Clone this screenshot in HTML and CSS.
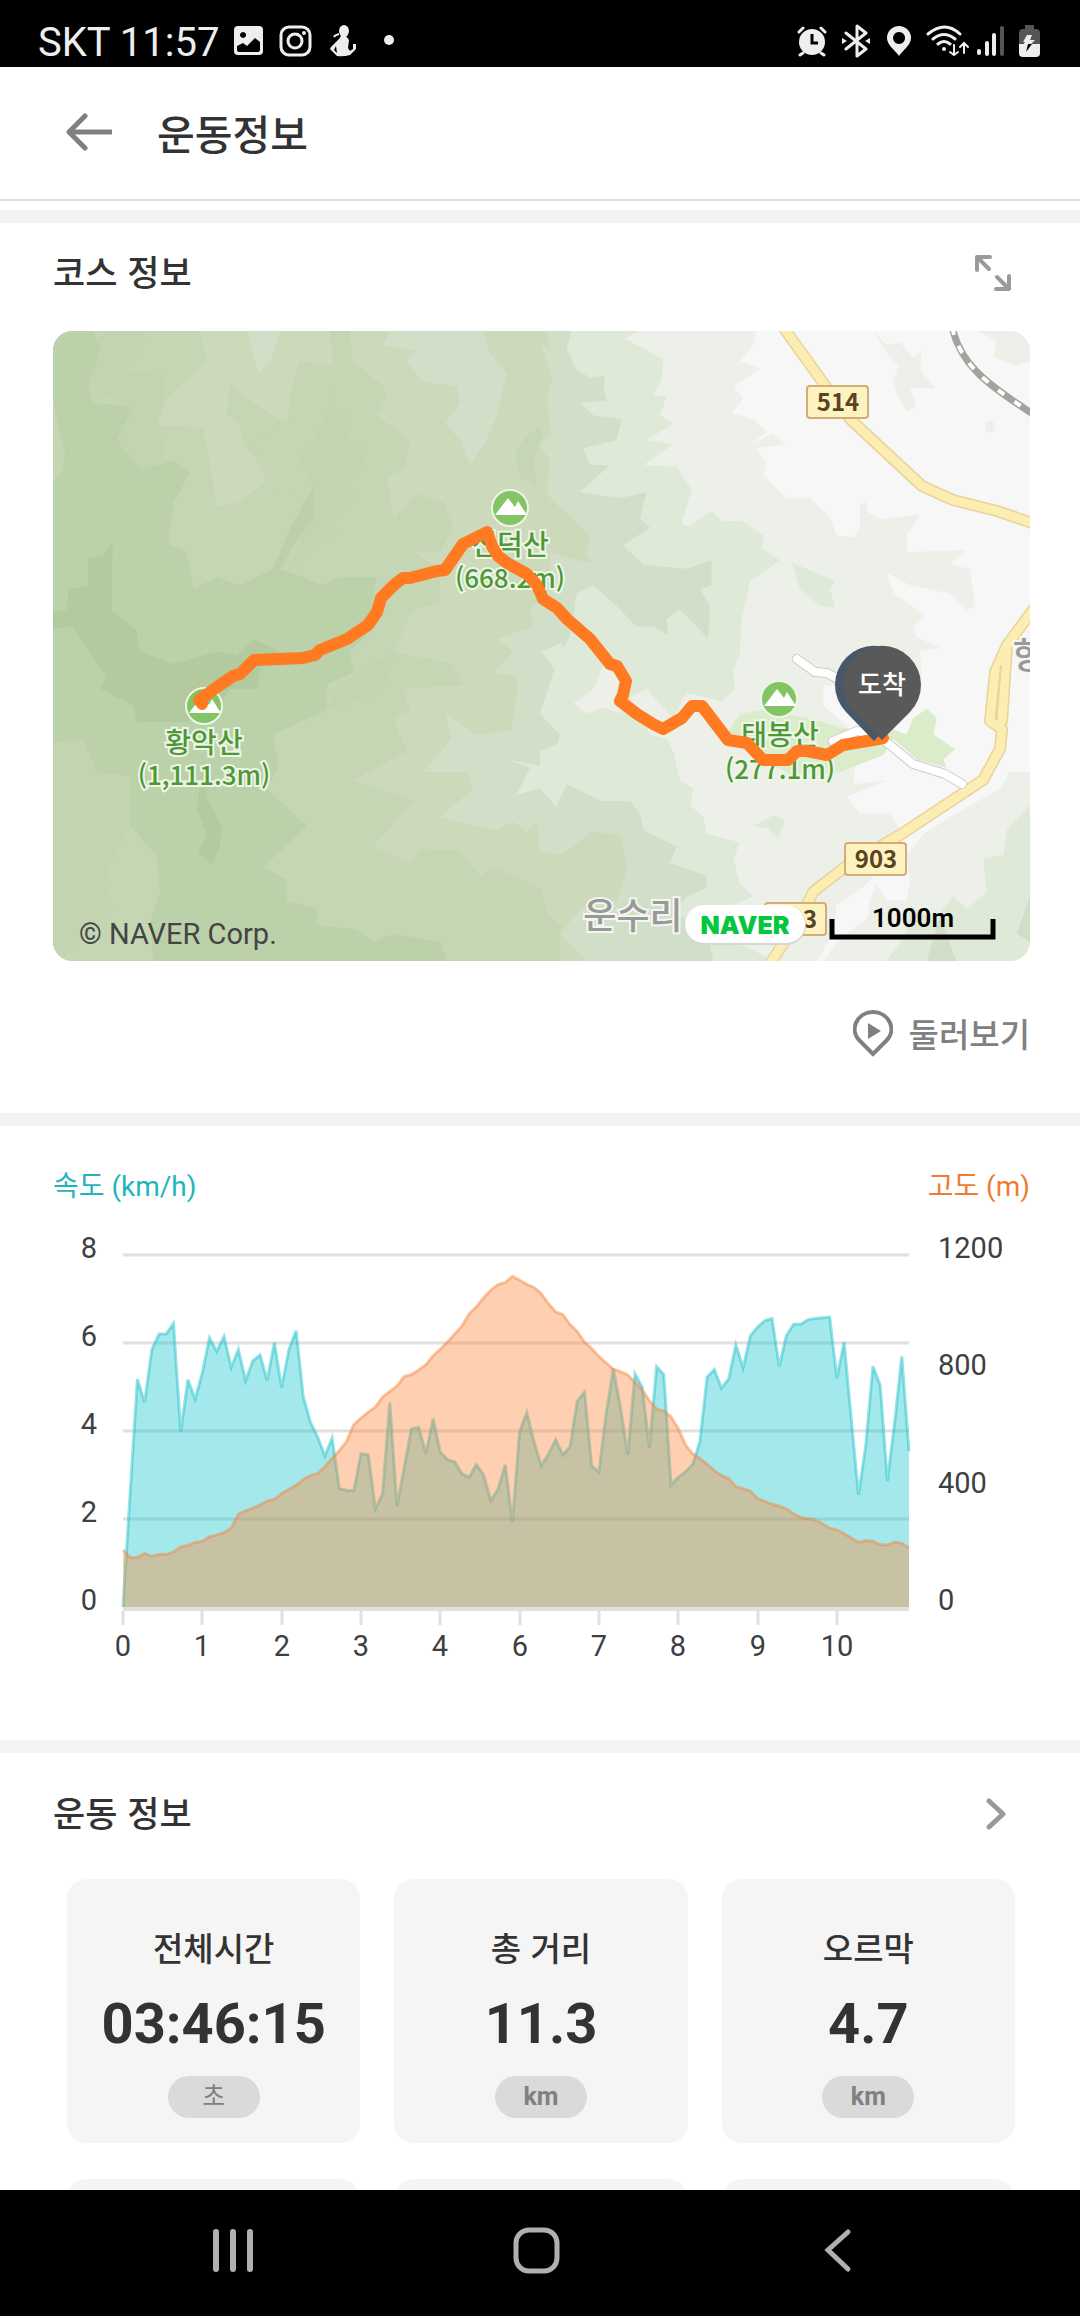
FILE: index.html
```
<!DOCTYPE html>
<html lang="ko">
<head>
    <meta charset="UTF-8">
    <meta name="viewport" content="width=device-width, initial-scale=1.0">
    <title>운동정보</title>
    <link rel="stylesheet" href="styles.css">
</head>
<body>

<div class="status-bar">
    <span class="carrier">SKT 11:57</span>
    <svg class="status-left" viewBox="0 0 166 34" width="166" height="34" fill="#eee">
        <!-- picture -->
        <path fill-rule="evenodd" d="M4 2h21a4 4 0 0 1 4 4v21a4 4 0 0 1-4 4H4a4 4 0 0 1-4-4V6a4 4 0 0 1 4-4zM3 22v4q0 2 2 2h19q2 0 2-2v-8l-5-4-8 8-4-3zM9 8a3 3 0 1 0 .1 0z"/>
        <!-- instagram -->
        <g fill="none" stroke="#eee" stroke-width="3">
            <rect x="47" y="3" width="29" height="28" rx="8"/>
            <circle cx="61" cy="17" r="7"/>
        </g>
        <circle cx="70" cy="9" r="2"/>
        <!-- running figure -->
        <ellipse cx="110" cy="7" rx="5" ry="6"/>
        <path fill-rule="evenodd" d="M107 12h5l3 4-1 8 2 3 3-2v-5h3v5l-6 6q-7 2-13 1l-7-7 1-2 8-8zM102 22l-2 4 3 3z"/>
        <path d="M100 13q1-2 5-3" fill="none" stroke="#eee" stroke-width="2"/>
        <circle cx="155" cy="16" r="5"/>
    </svg>
    <svg class="status-right" viewBox="0 0 246 34" width="246" height="34" fill="#eee">
        <!-- alarm -->
        <circle cx="15" cy="18" r="13"/>
        <path d="M2 8l4-4M28 8l-4-4M6 29l-3 2M24 29l3 2" stroke="#eee" stroke-width="3" stroke-linecap="round"/>
        <path d="M15 10v9h6" fill="none" stroke="#000" stroke-width="3"/>
        <!-- bluetooth -->
        <path d="M49 9l20 16-9 7V2l9 7-20 16" fill="none" stroke="#eee" stroke-width="3" stroke-linejoin="round" stroke-linecap="round"/>
        <path d="M45 14l5 3-5 3zM73 14l-5 3 5 3z"/>
        <!-- location -->
        <path fill-rule="evenodd" d="M102 2a12 12 0 0 1 12 12c0 7-8 12-12 18-4-6-12-11-12-18a12 12 0 0 1 12-12zm0 6a6 6 0 1 0 .1 0z"/>
        <!-- wifi -->
        <g fill="none" stroke="#eee" stroke-width="3" stroke-linecap="round">
            <path d="M131 10q17-14 32 0M136 15q11-9 22 0M141 20q6-5 12 0"/>
            <path d="M157 21v10m-4-3l4 3 4-3M167 29V19m-4 4l4-4 4 4" stroke-width="2"/>
        </g>
        <circle cx="147" cy="25" r="2"/>
        <!-- signal -->
        <g stroke-width="4" stroke-linecap="round">
            <path d="M182 27v2M190 19v11M197 11v19" stroke="#eee"/>
            <path d="M205 4v26" stroke="#555"/>
        </g>
        <!-- battery -->
        <path d="M228 1h9v4h2a4 4 0 0 1 4 4v11h-21V9a4 4 0 0 1 4-4h2z" fill="#555"/>
        <path d="M222 20h21v9a4 4 0 0 1-4 4h-13a4 4 0 0 1-4-4z"/>
        <path d="M230 11h5l-2 5h5l-5 5h-7l2-3h-2z"/>
        <path d="M229 28l2-8h4z" fill="#000"/>
    </svg>
</div>

<header class="header">
    <button class="icon-button" aria-label="뒤로">
        <svg viewBox="0 0 46 38" width="46" height="38" fill="none" stroke="#808080" stroke-width="5" stroke-linejoin="round">
            <path d="M3 19h43"/>
            <path d="M19 3L3 19l16 16" stroke-linecap="round"/>
        </svg>
    </button>
    <h1>운동정보</h1>
</header>

<main class="content">
    <section class="section course">
        <div class="section-head">
            <h2>코스 정보</h2>
            <button class="icon-button expand" aria-label="크게 보기">
                <svg viewBox="0 0 36 36" width="36" height="36" fill="none" stroke="#9a9a9a" stroke-width="4" stroke-linecap="round" stroke-linejoin="round">
                    <path d="M2 15V2h13M3 3l11 11"/>
                    <path d="M34 21v13H21M33 33L22 22"/>
                </svg>
            </button>
        </div>

        <svg class="map" viewBox="0 0 977 630" role="img" aria-label="코스 지도">
            <!-- terrain -->
            <rect width="977" height="630" fill="#f7f7f7"/>
            <svg width="977" height="630" viewBox="39 27 2931 1519" preserveAspectRatio="none">
                <path fill="#ecf0e8" d="M39 27H2150L2140 60 2100 100 2160 118 2080 160 2110 190 2075 225 2140 240 2180 270 2130 300 2200 275 2235 300 2150 310 2180 345 2170 375 2240 430 2310 430 2370 475 2390 520 2440 525 2460 500 2460 450 2475 437 2485 465 2520 480 2640 470 2600 520 2600 560 2780 555 2730 590 2790 600 2805 690 2780 700 2730 660 2610 640 2540 610 2560 660 2600 680 2655 715 2620 740 2630 765 2700 790 2640 800 2645 860 2570 900 2350 880 2350 930 2450 1000 2440 1120 2540 1110 2420 1150 2460 1190 2550 1190 2590 1240 2560 1300 2450 1380 2390 1410 2380 1480 2330 1546H39z"/>
                <path fill="#ecf0e8" d="M2970 1090L2910 1090 2880 1130 2750 1190 2650 1240 2600 1290 2610 1360 2600 1400 2540 1400 2510 1360 2490 1400 2485 1440 2390 1500 2350 1546H2970zM2810 27H2940L2970 60V100L2930 110 2860 90 2870 50zM2500 27L2540 60 2580 55 2620 90 2645 75 2640 120 2685 165 2610 165 2630 210 2600 220 2570 180 2560 150 2575 110 2540 80z"/>
                <circle cx="2850" cy="258" r="15" fill="#ecf0e8"/>
                <path fill="#dfe9d8" d="M39 27H1800L1755 45 1870 95 1865 145 1840 180 1880 185 1860 230 1900 250 1820 290 1900 300 1810 350 1910 355 1955 410 1925 490 1945 500 2015 460 2045 485 2105 485 2170 520 2165 550 2220 580 2130 630 2105 720 2100 800 2080 850 2085 890 2045 920 1940 900 1900 960 1820 890 1770 910 1830 1000 1880 1010 1900 1040 1920 1110 1960 1130 1950 1170 1990 1200 2000 1240 2100 1260 2080 1300 2100 1360 2140 1390 2060 1420 2000 1440 2080 1500 2140 1520 2200 1546H39z"/>
                <path fill="#ecf0e8" d="M1690 835L1735 860 1755 905 1740 950 1690 935 1640 950 1600 925 1660 890z"/>
                <path fill="#dfe9d8" d="M2255 585L2385 630 2370 650 2385 695 2340 690 2280 650zM2140 1220L2200 1195 2235 1205 2215 1250 2180 1225zM2970 1170L2900 1230 2890 1290 2830 1300 2840 1380 2780 1420 2740 1390 2680 1450 2610 1410 2600 1480 2540 1546H2970z"/>
                <path fill="#d2dfc8" d="M39 27H1595L1580 70 1610 120 1650 140 1695 135 1690 160 1700 195 1620 200 1660 230 1745 240 1730 290 1630 310 1650 350 1710 350 1620 415 1740 430 1820 415 1800 480 1830 500 1750 545 1810 590 1940 600 2015 580 2015 640 1980 650 2010 690 2005 770 1970 740 1920 700 1880 720 1885 760 1840 740 1790 740 1730 690 1660 640 1610 660 1590 760 1540 850 1500 950 1560 1000 1540 1060 1560 1130 1550 1170 1580 1120 1685 1160 1770 1160 1800 1190 1810 1230 1910 1270 1890 1310 2000 1340 2000 1370 1940 1390 1900 1430 2000 1470 2020 1546H39z"/>
                <path fill="#dfe9d8" d="M1400 1060L1500 1075 1500 1040 1560 1020 1600 1050 1550 1175 1500 1130 1430 1145 1470 1080zM1505 800L1560 780 1640 850 1600 860 1540 840z"/>
                <path fill="#d2dfc8" d="M2970 1390L2930 1480 2970 1500zM2700 1440L2660 1546H2750z"/>
                <path fill="#ccd9ba" d="M39 27H1520L1540 130 1520 190 1535 280 1545 360 1530 430 1650 520 1640 570 1670 590 1610 580 1530 560 1530 650 1470 700 1480 740 1370 770 1420 800 1360 850 1430 860 1430 900 1415 990 1310 1000 1215 950 1235 1010 1150 1090 1280 1090 1300 1130 1200 1200 1300 1220 1370 1230 1420 1210 1460 1235 1490 1210 1500 1280 1560 1290 1600 1270 1650 1235 1740 1240 1755 1290 1760 1330 1730 1400 1620 1420 1560 1480 1640 1546H39z"/>
                <path fill="#d2dfc8" d="M1030 60L1130 75 1100 100 1150 150 1250 160 1260 200 1215 250 1260 290 1290 350 1340 290 1370 230 1400 130 1350 80 1330 27H1050zM625 27L640 90 655 128 690 100 720 27zM1500 50L1560 100 1560 260 1500 300 1530 340 1520 420 1590 430 1560 200zM1740 620L1820 650 1790 660z"/>
                <path fill="#c5d6b5" d="M39 27H480L500 100 380 190 350 255 490 260 530 450 600 440 690 380 640 330 610 300 600 250 560 230 570 150 620 190 740 250 750 180 780 100 880 110 870 27H930L940 100 1030 160 1040 190 1010 230 1110 290 1090 360 1040 380 1060 480 1130 420 1210 440 1240 500 1200 560 1120 560 1200 600 1200 680 1120 700 1060 800 1240 830 1270 880 1090 890 1110 940 1060 960 1100 1040 940 1110 1120 1160 1000 1270 1110 1310 1140 1275 1260 1280 1320 1340 1360 1320 1500 1370 1530 1440 1560 1460V1546H39zM1500 255L1505 285 1480 340 1490 400 1440 380 1425 320 1460 280z"/>
                <path fill="#c5d6b5" d="M640 300L700 260 760 230 790 430 680 400z"/>
                <path fill="#c3d4b1" d="M880 170L890 220 935 240 920 300 980 310 970 360 900 380 950 430 880 470 890 510 750 600 800 480 820 400 780 340 850 250zM180 27H330L300 80 240 130 380 120 350 250 380 280 370 340 300 360 230 290 280 210 145 160zM1070 800L1020 900 860 940 900 880 1000 830zM39 1020L130 1010 170 1090 270 1100 270 1220 230 1280 190 1360 220 1420 60 1546H39z"/>
                <path fill="#bbd1a9" d="M39 27H160L180 70 145 160 160 200 280 210 230 290 300 360 400 340 450 370 400 440 385 540 440 560 460 650 530 620 600 640 700 600 740 520 820 400 820 480 780 520 720 600 850 640 900 620 1010 620 980 760 930 800 940 850 860 880 860 940 700 1000 715 1080 680 1130 800 1220 670 1320 740 1350 740 1400 830 1420 830 1460 950 1470 1000 1500 1060 1480 1200 1500 1220 1546H340L330 1450 360 1380 350 1290 270 1220 270 1100 170 1090 130 1010 39 1020z"/>
                <path fill="#b3c99e" d="M39 705L80 700 85 650 145 640 145 575 190 570 218 530 215 700 290 750 300 800 400 830 530 800 590 810 640 770 720 800 660 830 655 890 570 890 520 950 430 970 290 970 280 930 180 890 200 860 140 790 100 740 39 745zM490 1060L500 1150 545 1220 540 1270 515 1315 475 1285 500 1240 470 1180z"/>
                <path fill="#c5d6b5" d="M39 190L55 260 75 320 70 360 39 390z"/>
                <path fill="#dbeccb" d="M2100 950L2180 940 2300 960 2440 990 2550 985 2600 1000 2620 960 2660 938 2690 960 2680 1000 2745 1035 2710 1060 2720 1080 2630 1060 2560 1010 2530 1050 2400 1090 2260 1100 2050 1010z"/>
            </svg>

            <!-- roads -->
            <g fill="none" stroke-linejoin="round" stroke-linecap="round">
                <g stroke="#e8d39b" stroke-width="12">
                    <path d="M730-4L774 57 797 88 869 155 900 169 944 180 985 194"/>
                    <path d="M985 272L954 314 942 341 937 390 949 398 947 418 930 449 847 504 792 536 760 561 750 582 715 636"/>
                    <path d="M954 314L949 390"/>
                </g>
                <g stroke="#fcedb3" stroke-width="9">
                    <path d="M730-4L774 57 797 88 869 155 900 169 944 180 985 194"/>
                    <path d="M985 272L954 314 942 341 937 390 949 398 947 418 930 449 847 504 792 536 760 561 750 582 715 636"/>
                    <path d="M954 314L949 390"/>
                </g>
                <path d="M948 335L943 388" stroke="#e8d39b" stroke-width="2"/>
                <path d="M899-4Q905 22 924 41 938 56 980 83" stroke="#a5a19d" stroke-width="7"/>
                <path d="M899-4Q905 22 924 41 938 56 980 83" stroke="#fff" stroke-width="4" stroke-dasharray="8 12" stroke-linecap="butt"/>
                <path d="M744 328L762 341 774 342 800 356M780 410L804 400 824 404 837 414 860 433 892 443 909 453" stroke="#ccc" stroke-width="10"/>
                <path d="M744 328L762 341 774 342 800 356M780 410L804 400 824 404 837 414 860 433 892 443 909 453" stroke="#fff" stroke-width="8"/>
            </g>

            <!-- road numbers -->
            <g class="road-sign">
                <rect x="754" y="55" width="61" height="32" rx="3"/>
                <text x="785" y="80">514</text>
                <rect x="792" y="512" width="61" height="32" rx="3"/>
                <text x="823" y="537">903</text>
                <rect x="712" y="572" width="61" height="32" rx="3"/>
                <text x="743" y="597">903</text>
            </g>

            <text class="town" x="580" y="598">운수리</text>
            <text class="town" x="976" y="338">항</text>

            <!-- peaks -->
            <g class="peak">
                <circle cx="151" cy="375" r="18"/>
                <path d="M136 382l13-17 7 9 3-6 9 14z"/>
                <text x="151" y="422">황악산</text>
                <text class="height" x="151" y="454">(1,111.3m)</text>
                <circle cx="457" cy="177" r="18"/>
                <path d="M442 184l13-17 7 9 3-6 9 14z"/>
                <text x="457" y="224">신덕산</text>
                <text class="height" x="457" y="257">(668.2m)</text>
                <circle cx="726" cy="368" r="18"/>
                <path d="M711 375l13-17 7 9 3-6 9 14z"/>
                <text x="727" y="414">태봉산</text>
                <text class="height" x="727" y="448">(277.1m)</text>
            </g>

            <!-- route -->
            <polyline class="route" points="149,373 146,369 164,356 180,345 187,343 201,329 227,328 250,327 262,324 267,319 294,308 315,294 324,281 328,267 342,253 350,247 357,247 384,240 392,239 410,213 434,201 439,215 445,225 454,232 474,243 484,254 490,268 504,277 514,288 537,308 557,333 564,335 573,350 570,364 567,370 584,383 600,393 610,398 629,387 639,375 649,375 675,409 694,412 710,429 735,429 744,420 754,420 774,424 790,414 820,409 830,407"/>

            <!-- finish pin -->
            <path fill="#465869" d="M821 410l-28-29a39 39 0 1 1 56 0z"/>
            <path fill="#595959" d="M829 409l-28-28a39 39 0 1 1 56 0z"/>
            <text class="pin-label" x="829" y="363">도착</text>

            <text class="copyright" x="26" y="613">© NAVER Corp.</text>
            <rect x="631" y="574" width="122" height="40" rx="20" fill="#d5d8d2"/>
            <rect x="632" y="574" width="120" height="38" rx="19" fill="#fff"/>
            <text class="naver" x="692" y="603">NAVER</text>
            <text class="scale" x="860" y="596">1000m</text>
            <path d="M779 588v18h161v-18" fill="none" stroke="#000" stroke-width="5"/>
        </svg>

        <div class="tour-row">
            <a class="tour" href="#tour">
                <svg viewBox="0 0 40 48" width="40" height="48">
                    <path d="M20 45L7 32C-5 20 5 3 20 3s25 17 13 29z" fill="none" stroke="#808080" stroke-width="4"/>
                    <path d="M15 14l13 8-13 8z" fill="#808080"/>
                </svg>
                둘러보기
            </a>
        </div>
    </section>

    <section class="section chart-section">
        <div class="legend">
            <span class="legend-speed">속도 (km/h)</span>
            <span class="legend-altitude">고도 (m)</span>
        </div>
        <svg class="chart" viewBox="0 0 977 533" role="img" aria-label="속도와 고도">
            <path class="grid-line" d="M70 48h786M70 136h786M70 224h786M70 312h786"/>
            <path class="axis-line" d="M70 402h786"/>
            <g id="ticks"></g>
            <polygon id="speedArea" class="speed-area"/>
            <polyline id="speedLine" class="speed-line"/>
            <polygon id="altitudeArea" class="altitude-area"/>
            <polyline id="altitudeLine" class="altitude-line"/>
            <g class="axis-left">
                <text x="36" y="51">8</text>
                <text x="36" y="139">6</text>
                <text x="36" y="227">4</text>
                <text x="36" y="315">2</text>
                <text x="36" y="403">0</text>
            </g>
            <g class="axis-right">
                <text x="885" y="51">1200</text>
                <text x="885" y="168">800</text>
                <text x="885" y="286">400</text>
                <text x="885" y="403">0</text>
            </g>
        </svg>
    </section>

    <section class="section stats">
        <div class="section-head">
            <h2>운동 정보</h2>
            <button class="icon-button more" aria-label="더 보기">
                <svg viewBox="0 0 20 32" width="20" height="32" fill="none" stroke="#999" stroke-width="5" stroke-linecap="round" stroke-linejoin="round">
                    <path d="M3 3l14 13L3 29"/>
                </svg>
            </button>
        </div>
        <div class="cards">
            <div class="card">
                <h3>전체시간</h3>
                <p class="value">03:46:15</p>
                <span class="unit unit-ko">초</span>
            </div>
            <div class="card">
                <h3>총 거리</h3>
                <p class="value">11.3</p>
                <span class="unit">km</span>
            </div>
            <div class="card">
                <h3>오르막</h3>
                <p class="value">4.7</p>
                <span class="unit">km</span>
            </div>
            <div class="card"></div>
            <div class="card"></div>
            <div class="card"></div>
        </div>
    </section>
</main>

<nav class="nav-bar">
    <button aria-label="최근 앱">
        <svg viewBox="0 0 60 60" width="60" height="60" stroke="#b0b0b0" stroke-width="6" stroke-linecap="round">
            <path d="M13 12v37M30 12v37M47 12v37"/>
        </svg>
    </button>
    <button aria-label="홈">
        <svg viewBox="0 0 60 60" width="60" height="60" fill="none" stroke="#b0b0b0" stroke-width="5">
            <rect x="10" y="10" width="41" height="41" rx="13"/>
        </svg>
    </button>
    <button aria-label="뒤로 가기">
        <svg viewBox="0 0 60 60" width="60" height="60" fill="none" stroke="#b0b0b0" stroke-width="5" stroke-linecap="round">
            <path d="M40 12L20 30l20 19"/>
        </svg>
    </button>
</nav>

<script src="chart.js"></script>
</body>
</html>
```

FILE: styles.css
```
* {
    box-sizing: border-box;
}
body {
    margin: 0;
    height: 100vh;
    display: flex;
    flex-direction: column;
    background: #fff;
    color: #333;
    font-family: "Noto Sans CJK KR", sans-serif;
}
h1, h2, h3, p {
    margin: 0;
    font-weight: 500;
}
button {
    padding: 0;
    border: none;
    background: none;
    cursor: pointer;
}
svg {
    display: block;
}

/* status bar */
.status-bar {
    display: flex;
    align-items: center;
    flex: none;
    height: 67px;
    padding: 14px 37px 0 38px;
    background: #000;
}
.carrier {
    color: #eee;
    font-family: Roboto, sans-serif;
    font-size: 40px;
    line-height: 48px;
    padding-top: 4px;
}
.status-left {
    margin-left: 15px;
}
.status-right {
    margin-left: auto;
}

/* header */
.header {
    display: flex;
    align-items: center;
    flex: none;
    gap: 45px;
    height: 134px;
    padding: 0 0 2px 66px;
    border-bottom: 2px solid #e0e0e0;
}
.header h1 {
    font-size: 41px;
    line-height: 60px;
}

/* sections */
.content {
    flex: 1;
    min-height: 0;
    overflow: hidden;
    padding-top: 9px;
}
.section {
    padding: 0 50px 0 53px;
    border-top: 13px solid #f1f3f5;
}
.section-head {
    display: flex;
    align-items: center;
    justify-content: space-between;
    height: 100px;
}
.section-head h2 {
    padding-bottom: 4px;
    font-size: 35px;
    line-height: 52px;
}
.expand {
    margin-right: 19px;
}
.more {
    margin-right: 24px;
}

/* map */
.map {
    width: 100%;
    height: auto;
    margin-top: 8px;
    border-radius: 20px;
}
.map text {
    text-anchor: middle;
}
.road-sign rect {
    fill: #fdf3c0;
    stroke: #d5ab76;
    stroke-width: 2;
}
.road-sign text {
    fill: #5c4222;
    font-size: 24px;
    font-weight: 700;
}
.town {
    fill: #999;
    stroke: #f4f6f1;
    stroke-width: 4px;
    paint-order: stroke;
    font-size: 36px;
    font-weight: 500;
}
.peak circle {
    fill: #83c464;
    stroke: #eef6e8;
    stroke-width: 2;
}
.peak path {
    fill: #fff;
}
.peak text {
    fill: #4f9838;
    stroke: #eef6e8;
    stroke-width: 4px;
    paint-order: stroke;
    font-size: 28px;
    font-weight: 500;
}
.peak .height {
    font-size: 26px;
}
.route {
    fill: none;
    stroke: #ff7a21;
    stroke-width: 12;
    stroke-linecap: round;
    stroke-linejoin: round;
}
.pin-label {
    fill: #fff;
    font-size: 26px;
    font-weight: 500;
}
.map .copyright {
    text-anchor: start;
    fill: #444;
    font-family: Roboto, sans-serif;
    font-size: 29px;
}
.naver {
    fill: #03c73c;
    font-family: Inter, sans-serif;
    font-size: 25px;
    font-weight: 900;
}
.scale {
    fill: #000;
    font-family: Roboto, sans-serif;
    font-size: 26px;
    font-weight: 600;
}
.tour-row {
    display: flex;
    align-items: center;
    justify-content: flex-end;
    height: 152px;
    padding-bottom: 8px;
}
.tour {
    display: flex;
    align-items: center;
    gap: 16px;
    color: #808080;
    font-size: 33px;
    font-weight: 500;
    line-height: 48px;
    text-decoration: none;
}

/* chart */
.legend {
    display: flex;
    justify-content: space-between;
    padding-top: 41px;
    font-family: Roboto, "Noto Sans CJK KR", sans-serif;
    font-size: 28px;
    line-height: 40px;
}
.legend-speed {
    color: #1fb5bb;
}
.legend-altitude {
    color: #ee7d31;
}
.chart {
    width: 100%;
    height: auto;
}
.chart text {
    fill: #3c4043;
    font-family: Roboto, sans-serif;
    font-size: 29px;
}
.axis-left text,
.axis-bottom {
    text-anchor: middle;
}
.grid-line {
    stroke: #e0e0e0;
    stroke-width: 3;
}
.axis-line {
    stroke: #e0e0e0;
    stroke-width: 4;
}
.tick {
    stroke: #e0e0e0;
    stroke-width: 3;
}
.speed-area {
    fill: rgba(25, 200, 206, 0.4);
}
.speed-line {
    fill: none;
    stroke: rgba(25, 190, 200, 0.45);
    stroke-width: 3;
}
.altitude-area {
    fill: rgba(252, 135, 58, 0.4);
}
.altitude-line {
    fill: none;
    stroke: rgba(245, 130, 60, 0.45);
    stroke-width: 3;
}

/* stats */
.stats .section-head {
    height: 122px;
}
.cards {
    display: grid;
    grid-template-columns: repeat(3, 1fr);
    gap: 36px 34px;
    padding: 4px 15px 36px 14px;
}
.card {
    display: flex;
    flex-direction: column;
    align-items: center;
    min-height: 264px;
    padding: 46px 0 25px;
    border-radius: 20px;
    background: #f5f5f5;
}
.card h3 {
    font-size: 33px;
    line-height: 44px;
}
.value {
    margin-top: 19px;
    font-family: Roboto, sans-serif;
    font-size: 56px;
    font-weight: 700;
    line-height: 72px;
}
.unit {
    width: 92px;
    margin-top: 16px;
    border-radius: 21px;
    background: #dadada;
    color: #808080;
    font-family: Roboto, "Noto Sans CJK KR", sans-serif;
    font-size: 25px;
    font-weight: 700;
    line-height: 42px;
    text-align: center;
}
.unit-ko {
    font-weight: 400;
}

/* navigation bar */
.nav-bar {
    display: flex;
    align-items: center;
    justify-content: space-between;
    flex: none;
    height: 126px;
    padding: 0 212px 6px 203px;
    background: #000;
}
```

FILE: chart.js
```
// plot box inside the chart viewBox
const plot = { left: 70, right: 856, bottom: 400, height: 352 };
// samples are stored on a 0 - 986 scale (986 = 8 km/h or 1200 m)
const fullScale = 986;

const speed = [
    0, 321, 638, 573, 721, 765, 765, 795, 491, 637, 582,
    656, 754, 716, 758, 671, 721, 634, 689, 706, 635, 741,
    614, 721, 774, 589, 517, 476, 423, 473, 332, 327, 326,
    429, 427, 275, 318, 573, 283, 391, 499, 503, 430, 527,
    434, 413, 407, 374, 363, 399, 370, 298, 330, 398, 237,
    491, 544, 463, 396, 428, 469, 426, 450, 577, 602, 395,
    378, 541, 668, 556, 426, 653, 616, 446, 673, 651, 342,
    363, 379, 400, 463, 644, 665, 613, 639, 734, 670, 760,
    784, 802, 808, 674, 760, 792, 792, 805, 808, 810, 812,
    641, 742, 526, 314, 451, 674, 621, 353, 516, 702, 436
];

const altitude = [
    160, 139, 139, 150, 142, 147, 147, 154, 168, 173, 181,
    184, 197, 202, 209, 221, 260, 269, 277, 286, 297, 302,
    318, 330, 341, 357, 369, 374, 394, 416, 438, 464, 511,
    529, 546, 560, 588, 604, 619, 646, 651, 664, 679, 704,
    722, 742, 765, 787, 821, 841, 866, 888, 903, 909, 926,
    916, 904, 895, 878, 850, 827, 819, 791, 772, 742, 724,
    702, 684, 666, 659, 650, 629, 608, 578, 555, 549, 533,
    500, 454, 429, 416, 400, 382, 368, 360, 337, 332, 324,
    304, 296, 288, 283, 275, 261, 251, 247, 244, 233, 221,
    216, 206, 193, 181, 186, 184, 175, 173, 182, 179, 165
];

const labels = ['0', '1', '2', '3', '4', '6', '7', '8', '9', '10'];

function toPoints(samples) {
    const step = (plot.right - plot.left) / (samples.length - 1);
    return samples.map((value, i) => {
        const x = plot.left + i * step;
        const y = plot.bottom - value / fullScale * plot.height;
        return x.toFixed(1) + ',' + y.toFixed(1);
    }).join(' ');
}

function drawSeries(name, samples) {
    const points = toPoints(samples);
    document.getElementById(name + 'Line').setAttribute('points', points);
    document.getElementById(name + 'Area').setAttribute('points',
        `${plot.left},${plot.bottom} ${points} ${plot.right},${plot.bottom}`);
}

function drawTicks() {
    const step = (plot.right - plot.left) / (speed.length - 1) * 11;
    document.getElementById('ticks').innerHTML = labels.map((label, i) => {
        const x = Math.round(plot.left + i * step);
        return `<path class="tick" d="M${x} 404v14"/><text class="axis-bottom" x="${x}" y="449">${label}</text>`;
    }).join('');
}

drawSeries('speed', speed);
drawSeries('altitude', altitude);
drawTicks();
```
